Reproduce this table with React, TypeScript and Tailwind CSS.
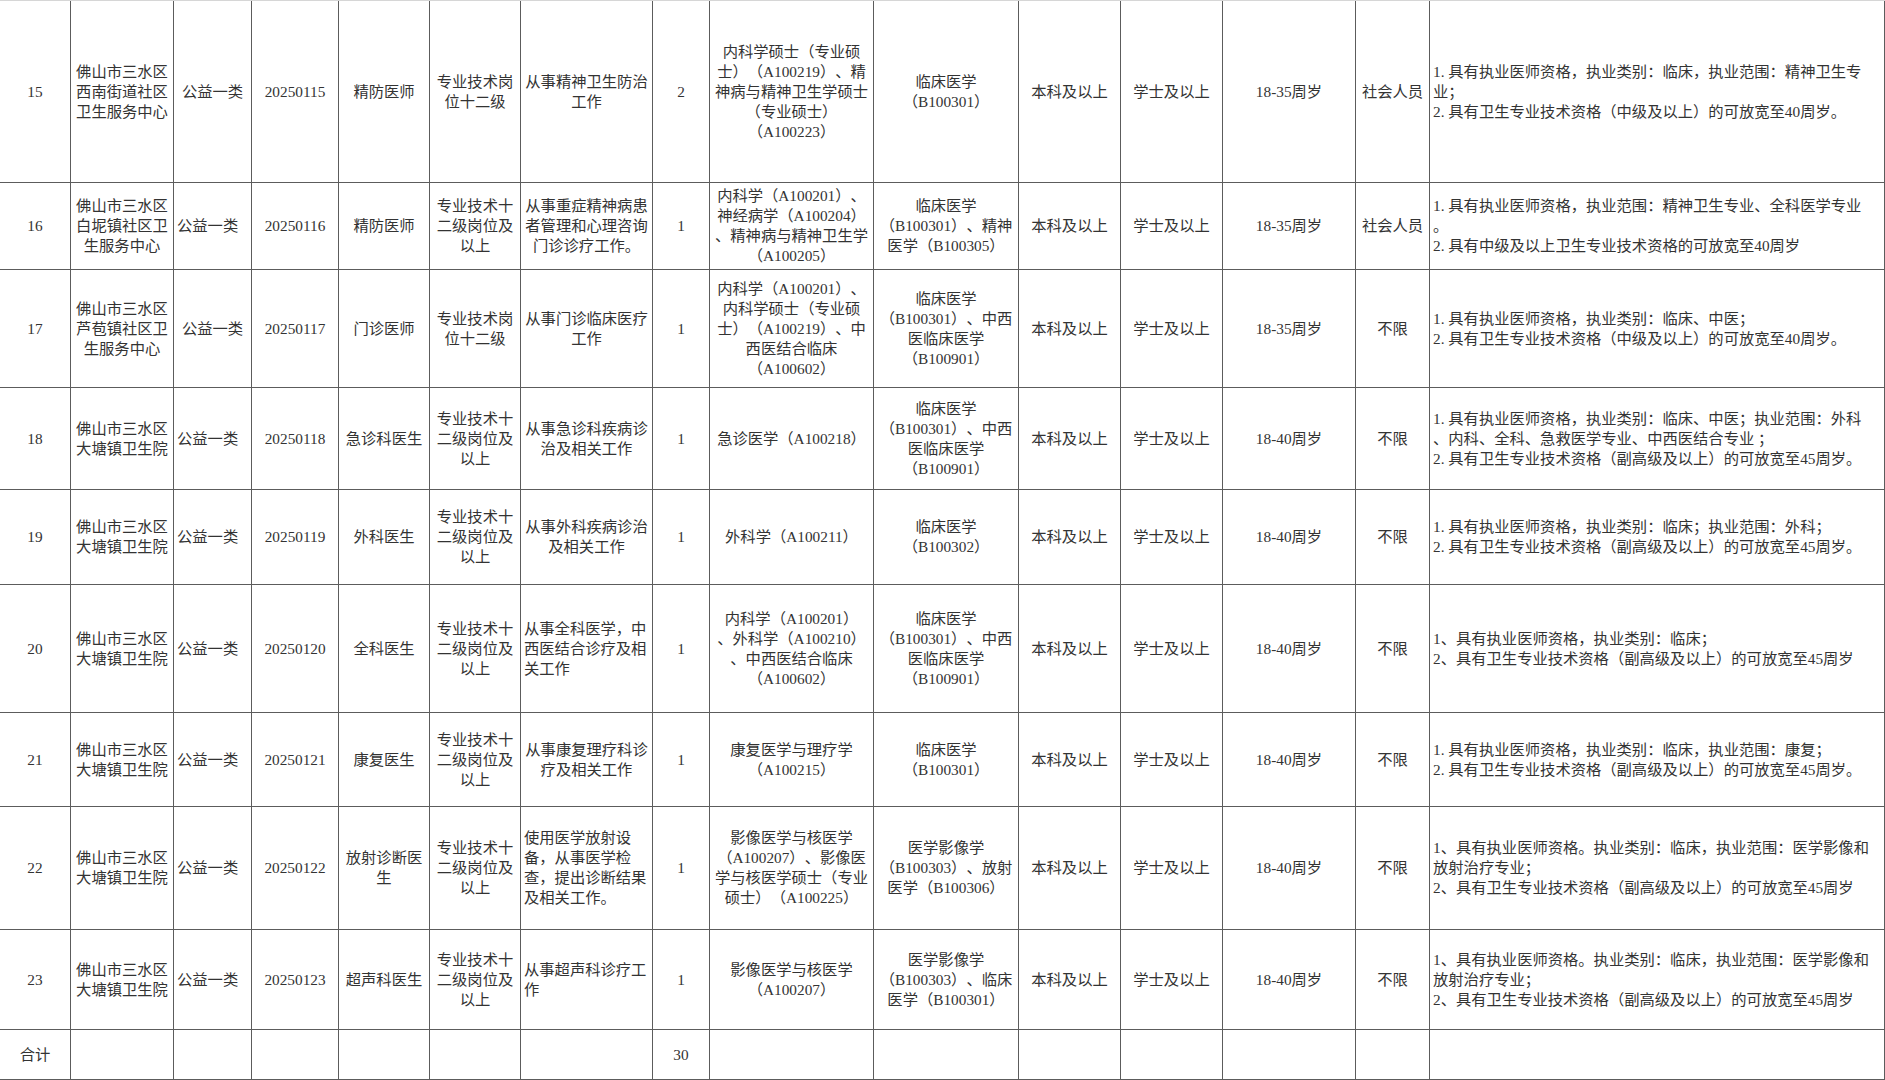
type Cell = { lines: string[]; left?: boolean };

const c = (lines: string | string[], left = false): Cell => ({
  lines: Array.isArray(lines) ? lines : [lines],
  left,
});

const unitDT = ['佛山市三水区', '大塘镇卫生院'];
const post12 = ['专业技术十', '二级岗位及', '以上'];

const rows: Cell[][] = [
  [
    c('15'),
    c(['佛山市三水区', '西南街道社区', '卫生服务中心']),
    c('公益一类'),
    c('20250115'),
    c('精防医师'),
    c(['专业技术岗', '位十二级']),
    c(['从事精神卫生防治', '工作']),
    c('2'),
    c(['内科学硕士（专业硕', '士）（A100219）、精', '神病与精神卫生学硕士', '（专业硕士）', '（A100223）']),
    c(['临床医学', '（B100301）']),
    c('本科及以上'),
    c('学士及以上'),
    c('18-35周岁'),
    c('社会人员'),
    c(['1. 具有执业医师资格，执业类别：临床，执业范围：精神卫生专', '业；', '2. 具有卫生专业技术资格（中级及以上）的可放宽至40周岁。'], true),
  ],
  [
    c('16'),
    c(['佛山市三水区', '白坭镇社区卫', '生服务中心']),
    c('公益一类', true),
    c('20250116'),
    c('精防医师'),
    c(post12),
    c(['从事重症精神病患', '者管理和心理咨询', '门诊诊疗工作。']),
    c('1'),
    c(['内科学（A100201）、', '神经病学（A100204）', '、精神病与精神卫生学', '（A100205）']),
    c(['临床医学', '（B100301）、精神', '医学（B100305）']),
    c('本科及以上'),
    c('学士及以上'),
    c('18-35周岁'),
    c('社会人员'),
    c(['1. 具有执业医师资格，执业范围：精神卫生专业、全科医学专业', '。', '2. 具有中级及以上卫生专业技术资格的可放宽至40周岁'], true),
  ],
  [
    c('17'),
    c(['佛山市三水区', '芦苞镇社区卫', '生服务中心']),
    c('公益一类'),
    c('20250117'),
    c('门诊医师'),
    c(['专业技术岗', '位十二级']),
    c(['从事门诊临床医疗', '工作']),
    c('1'),
    c(['内科学（A100201）、', '内科学硕士（专业硕', '士）（A100219）、中', '西医结合临床', '（A100602）']),
    c(['临床医学', '（B100301）、中西', '医临床医学', '（B100901）']),
    c('本科及以上'),
    c('学士及以上'),
    c('18-35周岁'),
    c('不限'),
    c(['1. 具有执业医师资格，执业类别：临床、中医；', '2. 具有卫生专业技术资格（中级及以上）的可放宽至40周岁。'], true),
  ],
  [
    c('18'),
    c(unitDT),
    c('公益一类', true),
    c('20250118'),
    c('急诊科医生'),
    c(post12),
    c(['从事急诊科疾病诊', '治及相关工作']),
    c('1'),
    c('急诊医学（A100218）'),
    c(['临床医学', '（B100301）、中西', '医临床医学', '（B100901）']),
    c('本科及以上'),
    c('学士及以上'),
    c('18-40周岁'),
    c('不限'),
    c(['1. 具有执业医师资格，执业类别：临床、中医；执业范围：外科', '、内科、全科、急救医学专业、中西医结合专业 ；', '2. 具有卫生专业技术资格（副高级及以上）的可放宽至45周岁。'], true),
  ],
  [
    c('19'),
    c(unitDT),
    c('公益一类', true),
    c('20250119'),
    c('外科医生'),
    c(post12),
    c(['从事外科疾病诊治', '及相关工作']),
    c('1'),
    c('外科学（A100211）'),
    c(['临床医学', '（B100302）']),
    c('本科及以上'),
    c('学士及以上'),
    c('18-40周岁'),
    c('不限'),
    c(['1. 具有执业医师资格，执业类别：临床；执业范围：外科；', '2. 具有卫生专业技术资格（副高级及以上）的可放宽至45周岁。'], true),
  ],
  [
    c('20'),
    c(unitDT),
    c('公益一类', true),
    c('20250120'),
    c('全科医生'),
    c(post12),
    c(['从事全科医学，中', '西医结合诊疗及相', '关工作'], true),
    c('1'),
    c(['内科学（A100201）', '、外科学（A100210）', '、中西医结合临床', '（A100602）']),
    c(['临床医学', '（B100301）、中西', '医临床医学', '（B100901）']),
    c('本科及以上'),
    c('学士及以上'),
    c('18-40周岁'),
    c('不限'),
    c(['1、具有执业医师资格，执业类别：临床；', '2、具有卫生专业技术资格（副高级及以上）的可放宽至45周岁'], true),
  ],
  [
    c('21'),
    c(unitDT),
    c('公益一类', true),
    c('20250121'),
    c('康复医生'),
    c(post12),
    c(['从事康复理疗科诊', '疗及相关工作']),
    c('1'),
    c(['康复医学与理疗学', '（A100215）']),
    c(['临床医学', '（B100301）']),
    c('本科及以上'),
    c('学士及以上'),
    c('18-40周岁'),
    c('不限'),
    c(['1. 具有执业医师资格，执业类别：临床，执业范围：康复；', '2. 具有卫生专业技术资格（副高级及以上）的可放宽至45周岁。'], true),
  ],
  [
    c('22'),
    c(unitDT),
    c('公益一类', true),
    c('20250122'),
    c(['放射诊断医', '生']),
    c(post12),
    c(['使用医学放射设', '备，从事医学检', '查，提出诊断结果', '及相关工作。'], true),
    c('1'),
    c(['影像医学与核医学', '（A100207）、影像医', '学与核医学硕士（专业', '硕士）（A100225）']),
    c(['医学影像学', '（B100303）、放射', '医学（B100306）']),
    c('本科及以上'),
    c('学士及以上'),
    c('18-40周岁'),
    c('不限'),
    c(['1、具有执业医师资格。执业类别：临床，执业范围：医学影像和', '放射治疗专业；', '2、具有卫生专业技术资格（副高级及以上）的可放宽至45周岁'], true),
  ],
  [
    c('23'),
    c(unitDT),
    c('公益一类', true),
    c('20250123'),
    c('超声科医生'),
    c(post12),
    c(['从事超声科诊疗工', '作'], true),
    c('1'),
    c(['影像医学与核医学', '（A100207）']),
    c(['医学影像学', '（B100303）、临床', '医学（B100301）']),
    c('本科及以上'),
    c('学士及以上'),
    c('18-40周岁'),
    c('不限'),
    c(['1、具有执业医师资格。执业类别：临床，执业范围：医学影像和', '放射治疗专业；', '2、具有卫生专业技术资格（副高级及以上）的可放宽至45周岁'], true),
  ],
  [
    c('合计'),
    c(''),
    c(''),
    c(''),
    c(''),
    c(''),
    c(''),
    c('30'),
    c(''),
    c(''),
    c(''),
    c(''),
    c(''),
    c(''),
    c(''),
  ],
];

function TableCell({ cell }: { cell: Cell }) {
  return (
    <div
      className={`flex items-center border-r border-b border-[#5c5c5c] overflow-hidden ${
        cell.left ? 'justify-start pl-[3px]' : 'justify-center'
      }`}
    >
      <div className={`flex flex-col ${cell.left ? 'items-start' : 'items-center'}`}>
        {cell.lines.map((line, i) => (
          <div key={i} className="whitespace-pre">
            {line}
          </div>
        ))}
      </div>
    </div>
  );
}

export default function App() {
  return (
    <div className="w-[1885px] h-[1080px] overflow-hidden bg-white">
      <div
        className="grid grid-cols-[71px_103px_78px_87px_91px_91px_132px_57px_164px_145px_102px_102px_133px_74px_455px] grid-rows-[182px_87px_118px_102px_95px_128px_94px_123px_100px_50px] border-t border-[#d6d6d6] text-[15.3px] leading-[20px] text-[#333333] [text-spacing-trim:space-all]"
        style={{ fontFamily: '"Liberation Serif", "Noto Sans CJK SC", serif' }}
      >
        {rows.map((row, r) =>
          row.map((cell, i) => <TableCell key={`${r}-${i}`} cell={cell} />)
        )}
      </div>
    </div>
  );
}
